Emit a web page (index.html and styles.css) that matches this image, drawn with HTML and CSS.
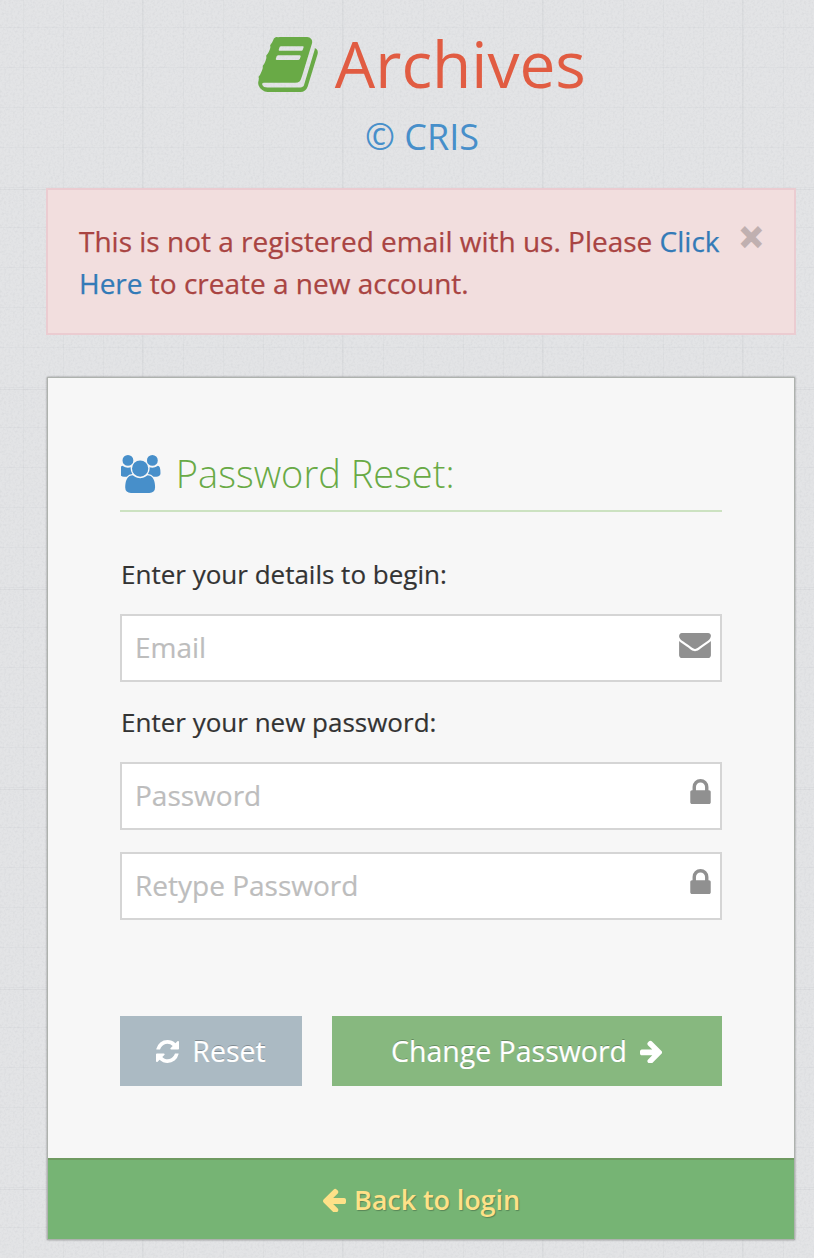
FILE: index.html
```html
<!DOCTYPE html>
<html lang="en">
<head>
<meta charset="utf-8">
<title>Archives - Password Reset</title>
<link rel="stylesheet" href="styles.css">
</head>
<body>
<header class="brand">
  <h1 class="brand-title">
    <svg class="brand-icon" viewBox="0 128 1664 1536" aria-hidden="true"><path d="M1639 478q40 57 18 129l-275 906q-19 64-76.500 107.500t-122.500 43.500h-923q-77 0-148.500-53.500t-99.500-131.500q-24-67-2-127 0-4 3-27t4-37q1-8-3-21.500t-3-19.500q2-11 8-21t16.500-23.500 16.500-23.500q23-38 45-91.500t30-91.500q3-10 .5-30t-.5-28q3-11 17-28t17-23q21-36 42-92t25-90q1-9-2.500-32t.5-28q4-13 22-30.500t22-22.500q19-26 42.500-84.500t27.500-96.500q1-8-3-25.500t-2-26.500q2-8 9-18t18-23 17-21q8-12 16.500-30.500t15-35 16-36 19.500-32 26.500-23.500 36-11.500 47.500 5.500l-1 3q38-9 51-9h761q74 0 114 56t18 130l-274 906q-36 119-71.500 153.500t-128.500 34.500h-869q-27 0-38 15-11 16-1 43 24 70 144 70h923q29 0 56-15.500t35-41.500l300-987q7-22 5-57 38 15 59 43zm-1064 2q-4 13 2 22.500t20 9.500h608q13 0 25.500-9.500t16.500-22.500l21-64q4-13-2-22.500t-20-9.500h-608q-13 0-25.500 9.500t-16.500 22.500zm-83 256q-4 13 2 22.500t20 9.500h608q13 0 25.500-9.500t16.500-22.500l21-64q4-13-2-22.500t-20-9.500h-608q-13 0-25.500 9.500t-16.500 22.500z"/></svg>
    Archives
  </h1>
  <h2 class="brand-sub">© CRIS</h2>
</header>

<div class="alert">
  <span class="alert-close">×</span>
  <p class="alert-text">This is not a registered email with us. Please <a class="alert-link" href="#">Click Here</a> to create a new account.</p>
</div>

<main class="card">
  <form class="card-body">
    <h3 class="form-title">
      <svg class="title-icon" viewBox="0 0 1920 1792" aria-hidden="true"><path d="M529 896q-162 5-265 128h-134q-82 0-138-40.500t-56-118.500q0-353 124-353 6 0 43.500 21t97.500 42.500 119 21.500q67 0 133-23-5 37-5 66 0 139 81 256zm1071 637q0 120-73 189.500t-194 69.500h-874q-121 0-194-69.500t-73-189.500q0-53 3.500-103.500t14-109 26.500-108.500 43-97.500 62-81 85.500-53.500 111.500-20q10 0 43 21.500t73 48 107 48 135 21.500 135-21.500 107-48 73-48 43-21.500q61 0 111.500 20t85.500 53.500 62 81 43 97.500 26.500 108.500 14 109 3.500 103.500zm-1024-1277q0 106-75 181t-181 75-181-75-75-181 75-181 181-75 181 75 75 181zm704 384q0 159-112.500 271.500t-271.500 112.500-271.500-112.500-112.500-271.500 112.500-271.500 271.500-112.500 271.500 112.500 112.500 271.500zm576 225q0 78-56 118.500t-138 40.500h-134q-103-123-265-128 81-117 81-256 0-29-5-66 66 23 133 23 59 0 119-21.500t97.500-42.500 43.500-21q124 0 124 353zm-128-609q0 106-75 181t-181 75-181-75-75-181 75-181 181-75 181 75 75 181z"/></svg>
      Password Reset:
    </h3>

    <p class="field-label">Enter your details to begin:</p>
    <div class="field">
      <input class="field-input" type="text" placeholder="Email">
      <svg class="field-icon icon-mail" viewBox="0 256 1792 1408" aria-hidden="true"><path d="M1792 710v794q0 66-47 113t-113 47h-1472q-66 0-113-47t-47-113v-794q44 49 101 87 362 246 497 345 57 42 92.500 65.500t94.500 48 110 24.500h2q51 0 110-24.500t94.500-48 92.500-65.500q170-123 498-345 57-39 100-87zm0-294q0 79-49 151t-122 123q-376 261-468 325-10 7-42.500 30.500t-54 38-52 32.500-57.500 27-50 9h-2q-23 0-50-9t-57.500-27-52-32.500-54-38-42.500-30.500q-91-64-262-182.500t-205-142.500q-62-42-117-115.500t-55-136.500q0-78 41.500-130t118.500-52h1472q65 0 112.500 47t47.500 113z"/></svg>
    </div>

    <p class="field-label label-second">Enter your new password:</p>
    <div class="field">
      <input class="field-input" type="password" placeholder="Password">
      <svg class="field-icon icon-lock" viewBox="320 128 1152 1408" aria-hidden="true"><path d="M640 768h512v-192q0-106-75-181t-181-75-181 75-75 181v192zm832 96v576q0 40-28 68t-68 28h-960q-40 0-68-28t-28-68v-576q0-40 28-68t68-28h32v-192q0-184 132-316t316-132 316 132 132 316v192h32q40 0 68 28t28 68z"/></svg>
    </div>
    <div class="field field-retype">
      <input class="field-input" type="password" placeholder="Retype Password">
      <svg class="field-icon icon-lock" viewBox="320 128 1152 1408" aria-hidden="true"><path d="M640 768h512v-192q0-106-75-181t-181-75-181 75-75 181v192zm832 96v576q0 40-28 68t-68 28h-960q-40 0-68-28t-28-68v-576q0-40 28-68t68-28h32v-192q0-184 132-316t316-132 316 132 132 316v192h32q40 0 68 28t28 68z"/></svg>
    </div>

    <div class="actions">
      <button class="btn btn-reset" type="reset">
        <svg class="btn-icon" viewBox="128 128 1536 1536" aria-hidden="true"><path d="M1639 1056q0 5-1 7-64 268-268 434.500t-478 166.500q-146 0-282.500-55t-243.500-157l-129 129q-19 19-45 19t-45-19-19-45v-448q0-26 19-45t45-19h448q26 0 45 19t19 45-19 45l-137 137q71 66 161 102t187 36q134 0 250-65t186-179q11-17 53-117 8-23 30-23h192q13 0 22.500 9.500t9.500 22.500zm25-800v448q0 26-19 45t-45 19h-448q-26 0-45-19t-19-45 19-45l138-138q-148-137-349-137-134 0-250 65t-186 179q-11 17-53 117-8 23-30 23h-199q-13 0-22.500-9.500t-9.500-22.500v-7q65-268 270-434.500t480-166.500q146 0 284 55.500t245 156.500l130-129q19-19 45-19t45 19 19 45z"/></svg>
        Reset
      </button>
      <button class="btn btn-submit" type="button">
        Change Password
        <svg class="btn-icon" viewBox="128 128 1536 1536" aria-hidden="true"><path d="M1600 960q0 54-37 91l-651 651q-39 37-91 37-51 0-90-37l-75-75q-38-38-38-91t38-91l293-293h-704q-52 0-84.500-37.500t-32.500-90.500v-128q0-53 32.500-90.500t84.500-37.500h704l-293-294q-38-36-38-90t38-90l75-75q38-38 90-38t91 38l651 651q37 35 37 90z"/></svg>
      </button>
    </div>
  </form>
  <a class="card-footer" href="#">
    <svg class="footer-icon" viewBox="128 128 1536 1536" aria-hidden="true"><path d="M1664 896v128q0 53-32.500 90.500t-84.500 37.500h-704l293 294q38 36 38 90t-38 90l-75 75q-38 38-91 38-52 0-90-38l-651-652q-37-37-37-90 0-52 37-91l651-650q39-38 90-38 52 0 90 38l75 74q38 38 38 91t-38 91l-293 293h704q52 0 84.500 37.500t32.500 90.500z"/></svg>
    Back to login
  </a>
</main>
</body>
</html>
```

FILE: styles.css
```css
* { box-sizing: border-box; }
html, body { margin: 0; padding: 0; }
body {
  min-height: 1258px;
  padding: 0 18px 0 46px;
  font-family: "Open Sans", "Liberation Sans", sans-serif;
  color: #333;
  background-color: #e3e4e6;
  background-image:
    linear-gradient(90deg, rgba(110,115,120,.07) 1px, transparent 1px),
    linear-gradient(0deg, rgba(110,115,120,.07) 1px, transparent 1px),
    linear-gradient(90deg, rgba(110,115,120,.04) 1px, transparent 1px),
    linear-gradient(0deg, rgba(110,115,120,.04) 1px, transparent 1px),
    url("data:image/svg+xml,%3Csvg xmlns='http://www.w3.org/2000/svg' width='200' height='200'%3E%3Cfilter id='n'%3E%3CfeTurbulence type='fractalNoise' baseFrequency='.45' numOctaves='2' stitchTiles='stitch'/%3E%3CfeColorMatrix values='0 0 0 0 .4 0 0 0 0 .42 0 0 0 0 .45 0 0 0 -.3 .18'/%3E%3C/filter%3E%3Crect width='200' height='200' filter='url(%23n)'/%3E%3C/svg%3E");
  background-size: 200px 200px, 200px 200px, 40px 40px, 40px 40px, 200px 200px;
  background-position: 142px 0, 0 190px, 23px 0, 0 28px, 0 0;
}
.brand { height: 188px; padding: 20px 0 0 2px; text-align: center; }
.brand-title {
  margin: 0;
  height: 88px;
  font-size: 64px;
  line-height: 88px;
  font-weight: 400;
  color: #e15c42;
}
.brand-icon { width: 60px; height: 55px; vertical-align: -4px; fill: #69aa46; }
.brand-sub { margin: 0; font-size: 36px; line-height: 58px; font-weight: 400; color: #478fca; }
.alert {
  position: relative;
  height: 147px;
  padding: 30px 30px 0 31px;
  background: #f2dede;
  border: 2px solid #ebccd1;
  color: #a94442;
}
.alert-close {
  position: absolute;
  top: 26px;
  right: 30px;
  font-size: 44px;
  line-height: 40px;
  font-weight: 700;
  color: #000;
  opacity: .2;
  -webkit-text-stroke: 1.5px #000;
}
.alert-text { margin: 0; width: 660px; font-size: 28px; line-height: 42px; -webkit-text-stroke: .25px; }
.alert-link { color: #337ab7; text-decoration: none; }
.card {
  margin: 42px 1px 0;
  border: 1px solid #aeb2ae;
  box-shadow: 0 0 2px rgba(0,0,0,.4);
  background: #f7f7f7;
}
.card-body { height: 780px; padding: 72px 72px 0; }
.form-title {
  margin: 0;
  height: 62px;
  border-bottom: 2px solid #cce2c1;
  font-size: 38px;
  line-height: 46px;
  font-weight: 300;
  color: #69aa46;
}
.title-icon { width: 41px; height: 38px; margin: 0 4px 0 1px; vertical-align: -5px; fill: #478fca; }
.field-label { margin: 42px 0 0 1px; font-size: 26px; line-height: 40px; color: #333; -webkit-text-stroke: .2px; }
.label-second { margin-top: 20px; }
.field { position: relative; margin-top: 20px; height: 68px; }
.label-second + .field { margin-top: 20px; }
.field-retype { margin-top: 22px; }
.field-input {
  display: block;
  width: 100%;
  height: 100%;
  padding: 0 50px 2px 13px;
  border: 2px solid #d5d5d5;
  background: #fff;
  font: 400 28px "Open Sans", sans-serif;
  color: #333;
  outline: none;
}
.field-input::placeholder { color: #bdbdbd; opacity: 1; -webkit-text-stroke: .2px; }
.field-icon { position: absolute; fill: #909090; right: 11px; }
.icon-mail { top: 19px; width: 32px; height: 25px; }
.icon-lock { top: 17px; width: 21px; height: 25px; }
.actions { display: flex; gap: 30px; margin-top: 96px; }
.btn {
  display: flex;
  align-items: center;
  justify-content: center;
  gap: 13px;
  height: 70px;
  border: 0;
  padding: 0;
  font: 400 28.5px "Open Sans", sans-serif;
  color: #fff;
  text-shadow: 0 -1px 0 rgba(0,0,0,.25);
  -webkit-text-stroke: .2px;
}
.btn-reset { width: 182px; background: #abbac3; }
.btn-submit { width: 390px; background: #87b87f; }
.btn-icon { width: 23px; height: 23px; fill: #fff; }
.card-footer {
  display: flex;
  align-items: center;
  justify-content: center;
  gap: 8px;
  height: 81px;
  border-top: 2px solid #6f9a61;
  background: #76b474;
  font-size: 27px;
  font-weight: 600;
  letter-spacing: -.1px;
  color: #fee188;
  text-decoration: none;
  text-shadow: 1px 1px 1px rgba(0,0,0,.25);
}
.footer-icon { width: 24px; height: 24px; fill: #fee188; }
```
